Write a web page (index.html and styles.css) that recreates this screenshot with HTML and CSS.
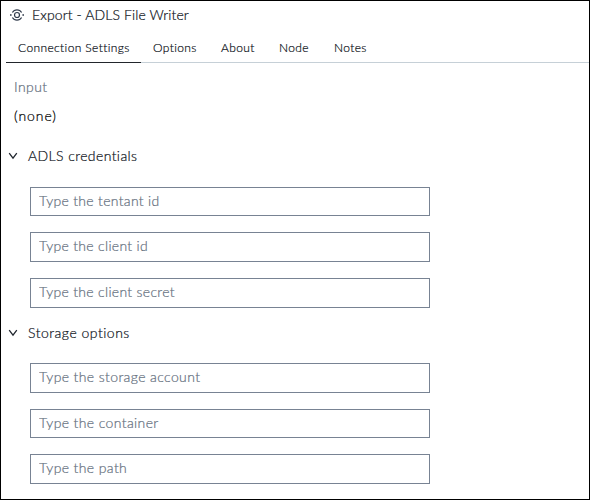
FILE: index.html
```html
<!DOCTYPE html>
<html lang="en">
<head>
<meta charset="utf-8">
<title>Export - ADLS File Writer</title>
<link rel="stylesheet" href="styles.css">
</head>
<body>
<main class="panel">
  <header class="title">
    <svg class="node-icon" viewBox="0 0 14 14" width="14" height="14" aria-hidden="true">
      <circle cx="7" cy="7" r="2.5"/>
      <path d="M2.4 4.5A5.3 5.3 0 0 1 11.6 4.5M2.4 9.5A5.3 5.3 0 0 0 11.6 9.5"/>
      <path class="dot" d="M0 6.2h1.6v1.6H0zM12.4 6.2H14v1.6h-1.6z"/>
    </svg>
    <h1>Export - ADLS File Writer</h1>
  </header>
  <nav class="tabs">
    <a class="tab tab-connection active">Connection Settings</a>
    <a class="tab tab-options">Options</a>
    <a class="tab tab-about">About</a>
    <a class="tab tab-node">Node</a>
    <a class="tab tab-notes">Notes</a>
  </nav>
  <div class="label">Input</div>
  <div class="value">(none)</div>
  <section class="group">
    <h2><svg class="chevron" viewBox="0 0 10 8" width="10" height="8"><path d="M1.2 1.2L5 6.2L8.8 1.2"/></svg><span>ADLS credentials</span></h2>
    <div class="fields">
      <input class="short" placeholder="Type the tentant id">
      <input placeholder="Type the client id">
      <input placeholder="Type the client secret">
    </div>
  </section>
  <section class="group storage">
    <h2><svg class="chevron" viewBox="0 0 10 8" width="10" height="8"><path d="M1.2 1.2L5 6.2L8.8 1.2"/></svg><span>Storage options</span></h2>
    <div class="fields">
      <input placeholder="Type the storage account">
      <input class="short" placeholder="Type the container">
      <input placeholder="Type the path">
    </div>
  </section>
</main>
</body>
</html>
```

FILE: styles.css
```css
* { box-sizing: border-box; }
body {
  margin: 0;
  background: #fff;
  color: #10151c;
  font: 300 14px/20px Lato, "Liberation Sans", sans-serif;
  letter-spacing: .4px;
  -webkit-text-stroke: .22px currentColor;
}
.panel {
  width: 590px;
  height: 500px;
  border: 1px solid #000;
  overflow: hidden;
}
.title {
  display: flex;
  align-items: center;
  height: 28px;
  padding-left: 9px;
}
h1, h2 { margin: 0; font-size: 14px; font-weight: 300; }
.title h1 { margin-left: 8px; letter-spacing: .11px; }
.node-icon { fill: none; stroke: #303b4b; stroke-width: 1.2; }
.node-icon .dot { fill: #303b4b; stroke: none; }
.tabs {
  display: flex;
  height: 34px;
  margin-left: 5px;
  border-bottom: 1px solid #c6d0d7;
}
.tab {
  height: 34px;
  padding: 9px 0 0 12px;
  font-size: 12px;
  line-height: 20px;
  letter-spacing: .38px;
  white-space: nowrap;
}
.tab.active { border-bottom: 1px solid #22262c; }
.tab-connection { width: 135px; }
.tab-options { width: 68px; }
.tab-about { width: 58px; }
.tab-node { width: 55px; }
.label { height: 20px; margin: 14px 0 0 13px; color: #667180; }
.value { height: 20px; margin: 9px 0 0 13px; color: #000; letter-spacing: .95px; }
.group { margin-top: 20px; }
.group h2 { display: flex; align-items: center; height: 20px; padding-left: 7px; }
.group h2 span { margin-left: 10px; }
.storage h2 { letter-spacing: .5px; }
.chevron { fill: none; stroke: #20262e; stroke-width: 1.3; }
.fields {
  display: flex;
  flex-direction: column;
  gap: 16px;
  width: 400px;
  margin: 21px 0 0 29px;
}
input {
  height: 30px;
  padding: 0 8px 4px;
  border: 1px solid #788393;
  border-radius: 0;
  background: #fff;
  font: inherit;
  letter-spacing: .31px;
  -webkit-text-stroke: inherit;
}
input.short { height: 29px; padding-bottom: 3px; }
input::placeholder { color: #667180; opacity: 1; -webkit-text-stroke: .22px #667180; }
.group.storage { margin-top: 15px; }
.storage .fields { margin-top: 20px; }
.storage input { letter-spacing: .38px; }
```
